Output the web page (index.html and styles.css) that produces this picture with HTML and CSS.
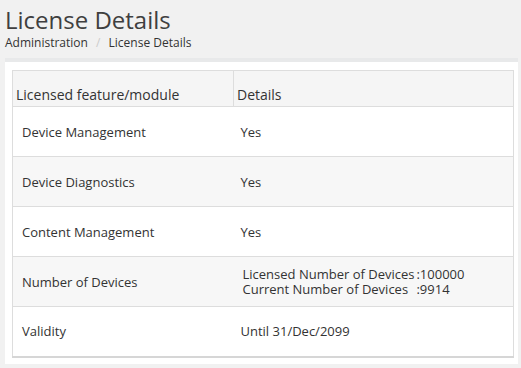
FILE: index.html
```html
<!DOCTYPE html>
<html lang="en">
<head>
    <meta charset="UTF-8">
    <title>License Details</title>
    <link rel="stylesheet" href="styles.css">
</head>
<body>
    <!-- Page header -->
    <div class="page-header">
        <h1>License Details</h1>
        <div class="breadcrumb">
            <a href="#">Administration</a>
            <span class="sep">/</span>
            <span>License Details</span>
        </div>
    </div>

    <!-- License table -->
    <div class="panel">
        <table class="license-table">
            <thead>
                <tr>
                    <th class="col-feature">Licensed feature/module</th>
                    <th>Details</th>
                </tr>
            </thead>
            <tbody>
                <tr>
                    <td class="col-feature">Device Management</td>
                    <td>Yes</td>
                </tr>
                <tr>
                    <td class="col-feature">Device Diagnostics</td>
                    <td>Yes</td>
                </tr>
                <tr>
                    <td class="col-feature">Content Management</td>
                    <td>Yes</td>
                </tr>
                <tr>
                    <td class="col-feature">Number of Devices</td>
                    <td>
                        <table class="count-table">
                            <tr>
                                <td>Licensed Number of Devices</td>
                                <td>:100000</td>
                            </tr>
                            <tr>
                                <td>Current Number of Devices</td>
                                <td>:9914</td>
                            </tr>
                        </table>
                    </td>
                </tr>
                <tr>
                    <td class="col-feature">Validity</td>
                    <td>Until 31/Dec/2099</td>
                </tr>
            </tbody>
        </table>
    </div>
</body>
</html>
```

FILE: styles.css
```css
/* Basic reset and font setup */
* {
    margin: 0;
    padding: 0;
    box-sizing: border-box;
}

body {
    font-family: 'Open Sans', sans-serif;
    font-size: 13px;
    color: #333;
    background-color: #f1f1f1;
    height: 368px;
    overflow: hidden;
}

/* Header */
.page-header {
    padding: 6px 5px 0;
}

.page-header h1 {
    font-size: 24px;
    font-weight: 400;
    line-height: 28px;
    margin-bottom: 1px;
    color: #3f3f3f;
}

.breadcrumb {
    font-size: 12px;
    line-height: 16px;
    color: #333;
}

.breadcrumb a {
    color: #333;
    text-decoration: none;
}

.breadcrumb .sep {
    color: #ccc;
    padding: 0 5px;
}

/* Panel */
.panel {
    margin: 7px 3px 0 5px;
    background-color: #fff;
    border-top: 4px solid #e8e9ea;
    padding: 8px 4px 6px 7px;
}

.license-table {
    width: 100%;
    border-collapse: collapse;
    border: 1px solid #ddd;
    border-bottom: 2px solid #d6d6d6;
}

.license-table th {
    background-color: #f5f5f5;
    font-weight: 400;
    font-size: 14px;
    text-align: left;
    height: 36px;
    padding: 12px 3px 0;
    border: 1px solid #ddd;
}

.license-table td {
    height: 50px;
    padding: 0 7px;
    border-top: 1px solid #ddd;
    vertical-align: middle;
}

.license-table td.col-feature {
    width: 221px;
    padding-left: 9px;
}

.license-table tbody tr:nth-child(even) {
    background-color: #f7f7f7;
}

/* Nested count table */
.count-table {
    border-collapse: collapse;
    margin-left: 2px;
}

.count-table td {
    height: auto;
    border: none;
    padding: 0;
    line-height: 15px;
}

.count-table td:first-child {
    padding-right: 2px;
}
```
